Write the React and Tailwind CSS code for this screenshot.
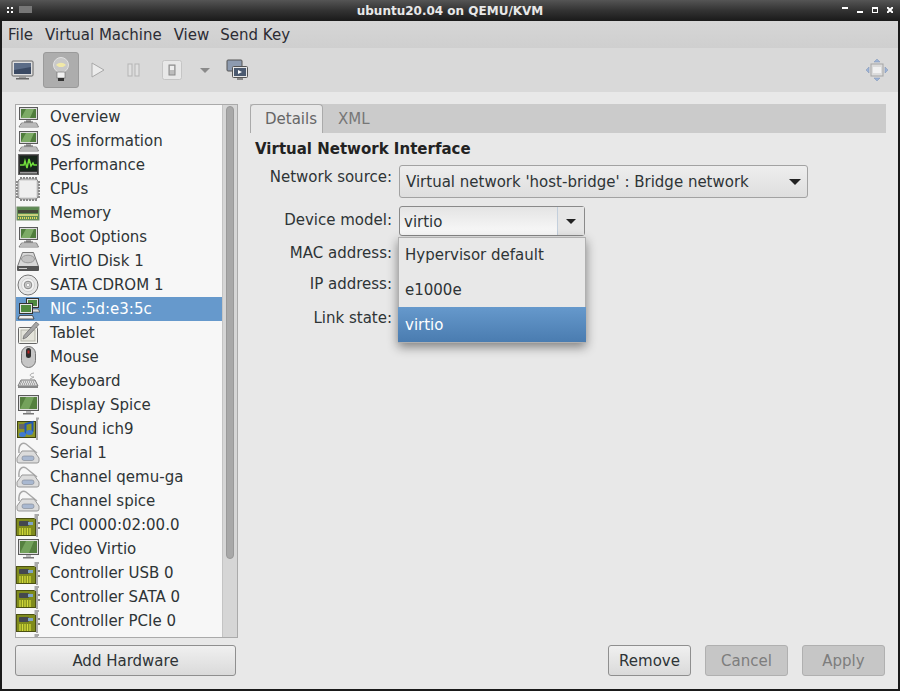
import React from "react";

const Monitor = () => (
  <svg width="24" height="24" viewBox="0 0 24 24">
    <rect x="3.500" y="2.500" width="18" height="12" fill="#dcdcdc" stroke="#5a5a5a" />
    <rect x="5" y="4" width="15" height="9" fill="#4f7d3c" />
    <path d="M10 4h8l-4 9H5z" fill="#7dab66" />
    <rect x="10" y="15" width="5" height="2" fill="#a5a5a5" />
    <path d="M8 17h9" stroke="#555" />
    <path d="M3 22l2.500-4h15l2 4z" fill="#ededed" stroke="#666" strokeWidth="0.800" />
    <path d="M5 20h16" stroke="#8a8a8a" />
  </svg>
);
const Display = () => (
  <svg width="24" height="24" viewBox="0 0 24 24">
    <rect x="2.500" y="2.500" width="20" height="15" fill="#dedede" stroke="#5a5a5a" />
    <rect x="4" y="4" width="17" height="12" fill="#55803f" />
    <path d="M10 4h8l-5 12H4z" fill="#74a25c" />
    <rect x="10" y="18" width="5" height="2" fill="#bbb" />
    <rect x="7" y="20" width="11" height="1.500" fill="#777" />
  </svg>
);
const Perf = () => (
  <svg width="24" height="24" viewBox="0 0 24 24">
    <rect x="2.500" y="1.500" width="20" height="20" fill="#333" stroke="#666" />
    <rect x="4" y="3" width="17" height="15" fill="#16261a" />
    <path d="M4 12h4l1-4 2 7 2-9 2 7 2-3 1 2h3" fill="none" stroke="#72e03c" strokeWidth="1.500" />
    <rect x="4" y="19" width="17" height="1.500" fill="#999" />
  </svg>
);
const Cpu = () => (
  <svg width="24" height="24" viewBox="0 0 24 24">
    <path d="M5 0v24M8 0v24M11 0v24M14 0v24M17 0v24M20 0v24M0 5h24M0 8h24M0 11h24M0 14h24M0 17h24M0 20h24" stroke="#6a6a6a" strokeWidth="1.600" />
    <rect x="2" y="2" width="20" height="20" rx="3" fill="#dcdcdc" stroke="#8a8a8a" />
    <rect x="4" y="4" width="16" height="16" fill="#efefef" />
  </svg>
);
const Memory = () => (
  <svg width="24" height="24" viewBox="0 0 24 24">
    <rect x="1" y="6" width="22" height="13" fill="#5d8a52" stroke="#6f8c65" />
    <rect x="2" y="9" width="20" height="3" fill="#45483a" />
    <rect x="2" y="13" width="20" height="2" fill="#c9cf7b" />
    <path d="M2 17h20" stroke="#e1d85c" strokeWidth="2" strokeDasharray="1 1" />
  </svg>
);
const Disk = () => (
  <svg width="24" height="24" viewBox="0 0 24 24">
    <path d="M6.500 3.500h11l5 14H1.500z" fill="#d8d8d8" stroke="#777" />
    <ellipse cx="12" cy="10" rx="6.500" ry="3.800" fill="#c2c2c2" stroke="#999" />
    <rect x="1" y="17" width="22" height="5" rx="1" fill="#555" />
    <rect x="3" y="19" width="8" height="1" fill="#ccc" />
  </svg>
);
const Cdrom = () => (
  <svg width="24" height="24" viewBox="0 0 24 24">
    <circle cx="12" cy="12" r="10" fill="#e6e6e6" stroke="#777" />
    <circle cx="12" cy="12" r="6.500" fill="#f4f4f4" stroke="#d2d2d2" />
    <circle cx="12" cy="12" r="3.800" fill="#c8c8c8" stroke="#888" />
    <circle cx="12" cy="12" r="1.600" fill="#fff" stroke="#999" strokeWidth="0.600" />
  </svg>
);
const Nic = () => (
  <svg width="24" height="24" viewBox="0 0 24 24">
    <rect x="10.500" y="1.500" width="12" height="9" fill="#e5e5e5" stroke="#333" />
    <rect x="12" y="3" width="9" height="6" fill="#4f8a3e" />
    <path d="M13 12h9l2 3H15z" fill="#ddd" stroke="#444" strokeWidth="0.600" />
    <rect x="3.500" y="6.500" width="13" height="10" fill="#e5e5e5" stroke="#333" />
    <rect x="5" y="8" width="10" height="7" fill="#4f8a3e" />
    <path d="M2 22l1.500-3.500h13L18 22z" fill="#eee" stroke="#333" strokeWidth="0.800" />
  </svg>
);
const Tablet = () => (
  <svg width="24" height="24" viewBox="0 0 24 24">
    <rect x="2.500" y="6.500" width="19" height="16" rx="1" fill="#f4f4ee" stroke="#666" />
    <rect x="5" y="9" width="14" height="11" fill="#e3e3da" stroke="#b5b5aa" />
    <path d="M7 18l1-3.500L20 1l3 2.500L10.500 16.500z" fill="#a5a5a5" stroke="#666" strokeWidth="0.700" />
  </svg>
);
const Mouse = () => (
  <svg width="24" height="24" viewBox="0 0 24 24">
    <rect x="5.500" y="1.500" width="14" height="21" rx="7" fill="#c6c6c6" stroke="#777" />
    <rect x="10" y="3" width="5" height="10" rx="2.500" fill="#2e2e2e" />
    <rect x="11.500" y="5.500" width="2" height="3" fill="#b22" />
  </svg>
);
const Keyboard = () => (
  <svg width="24" height="24" viewBox="0 0 24 24">
    <path d="M18 4c-6 1-4 4 0 4l-4 2" fill="none" stroke="#aaa" />
    <path d="M5 11h14l3 6H2z" fill="#ddd" stroke="#777" />
    <path d="M5 13h14M4 15h16" stroke="#777" strokeDasharray="1 1" />
    <rect x="2" y="17" width="20" height="2" fill="#888" />
  </svg>
);
const Sound = () => (
  <svg width="24" height="24" viewBox="0 0 24 24">
    <rect x="1.500" y="4.500" width="18" height="16" fill="#8b9526" stroke="#3f4410" />
    <rect x="3" y="7" width="6" height="5" fill="#666" />
    <path d="M20 1.500h3M21 1.500V23" fill="none" stroke="#a9a9a9" strokeWidth="2" />
    <path d="M9.500 17V7l7-2v10" fill="none" stroke="#1f55b5" strokeWidth="2" />
    <ellipse cx="6.500" cy="17.500" rx="3.500" ry="2.500" fill="#3f7ad0" />
    <ellipse cx="13.500" cy="15.500" rx="3.500" ry="2.500" fill="#3f7ad0" />
  </svg>
);
const Serial = () => (
  <svg width="24" height="24" viewBox="0 0 24 24">
    <path d="M3 12C2 3 7 1 10 3l11 9" fill="none" stroke="#a8a8a8" strokeWidth="1.500" />
    <path d="M6 10h12l5 7v3a2 2 0 0 1-2 2H3a2 2 0 0 1-2-2v-3z" fill="#dcdcdc" stroke="#979797" />
    <rect x="6" y="15" width="12" height="4.500" rx="2" fill="#a9b8d0" stroke="#7e8590" strokeWidth="0.600" />
  </svg>
);
const Pci = () => (
  <svg width="24" height="24" viewBox="0 0 24 24">
    <rect x="0.500" y="5.500" width="19" height="17" fill="#7f8b1d" stroke="#4b5012" />
    <rect x="3" y="8" width="10" height="5" rx="1" fill="#44484f" />
    <rect x="12" y="9" width="5" height="3" fill="#7fa3c7" />
    <path d="M4 15v7M6.500 15v7M9 15v7M11.500 15v7M14 15v7" stroke="#d2d93a" strokeWidth="1.300" />
    <path d="M19.500 6V2H23M21 2v22" fill="none" stroke="#a9a9a9" strokeWidth="2" />
    <rect x="22" y="9" width="2" height="2" fill="#888" />
    <rect x="22" y="14" width="2" height="2" fill="#888" />
  </svg>
);

const hardware = [
  ["Overview", Monitor],
  ["OS information", Monitor],
  ["Performance", Perf],
  ["CPUs", Cpu],
  ["Memory", Memory],
  ["Boot Options", Monitor],
  ["VirtIO Disk 1", Disk],
  ["SATA CDROM 1", Cdrom],
  ["NIC :5d:e3:5c", Nic],
  ["Tablet", Tablet],
  ["Mouse", Mouse],
  ["Keyboard", Keyboard],
  ["Display Spice", Display],
  ["Sound ich9", Sound],
  ["Serial 1", Serial],
  ["Channel qemu-ga", Serial],
  ["Channel spice", Serial],
  ["PCI 0000:02:00.0", Pci],
  ["Video Virtio", Display],
  ["Controller USB 0", Pci],
  ["Controller SATA 0", Pci],
  ["Controller PCIe 0", Pci],
  ["", Pci],
];

const Tool = ({ children, className = "" }) => (
  <div className={`flex h-9 w-9 items-center justify-center ${className}`}>{children}</div>
);

function Row({ label, labelClass = "", children, rowClass = "" }) {
  return (
    <div className={`flex items-start ${rowClass}`}>
      <div className={`w-[142px] whitespace-nowrap text-right ${labelClass}`}>{label}</div>
      {children}
    </div>
  );
}

export default function App() {
  return (
    <div
      className="flex h-[691px] w-[900px] flex-col overflow-hidden bg-[#1a1a1a] text-[15px] leading-[18px] text-[#2e3436]"
      style={{ fontFamily: '"DejaVu Sans", sans-serif' }}
    >
      {/* Title bar */}
      <div className="relative flex h-[21px] shrink-0 items-center justify-center bg-gradient-to-b from-[#555] via-[#333] via-50% to-[#1a1a1a]">
        <span className="text-[12px] font-bold text-[#e8e8e8]">ubuntu20.04 on QEMU/KVM</span>
        <div className="absolute left-[7px] top-[7px] grid grid-cols-2 gap-[2px]">
          <i className="h-[2px] w-[2px] bg-white" />
          <i className="h-[2px] w-[2px] bg-white" />
          <i className="h-[2px] w-[2px] bg-white" />
          <i className="h-[2px] w-[2px] bg-white" />
        </div>
        <div className="absolute left-[19px] top-[6px] h-[7px] w-[13px] bg-[#777]" />
        <div className="absolute left-[842px] top-[7px] h-[2px] w-[6px] bg-white" />
        <div className="absolute left-[857px] top-[11px] h-[2px] w-[6px] bg-white" />
        <div className="absolute left-[872px] top-[7px] h-[6px] w-[6px] border border-t-2 border-white" />
        <svg className="absolute left-[887px] top-[7px]" width="6" height="6" viewBox="0 0 6 6">
          <path d="M0 0l6 6M6 0l-6 6" stroke="#fff" strokeWidth="2" />
        </svg>
      </div>

      <div className="ml-[2px] mr-[2px] flex h-[668px] flex-col bg-[#e8e8e8]">
        {/* Menu bar */}
        <div className="flex h-[27px] shrink-0 items-center gap-[12px] bg-gradient-to-b from-[#d6d6d6] to-[#cfcfcf] pl-[6px] text-[#2c2c34]">
          <span>File</span>
          <span>Virtual Machine</span>
          <span>View</span>
          <span className="-ml-[1px]">Send Key</span>
        </div>

        {/* Toolbar */}
        <div className="flex h-[44px] shrink-0 items-center bg-[#d9d9d9] pl-[3px] pr-[3px]">
          <Tool>
            <svg width="24" height="22" viewBox="0 0 24 22">
              <rect x="1" y="2" width="21" height="15" rx="1" fill="#dfdfdf" stroke="#666" />
              <rect x="3" y="4" width="17" height="11" fill="#3b4a63" />
              <path d="M3 4h17v4L3 11z" fill="#5b6c87" />
              <rect x="8" y="17" width="7" height="2" fill="#999" />
              <rect x="5" y="19" width="13" height="1.500" fill="#666" />
            </svg>
          </Tool>
          <Tool className="ml-[2px] rounded-[3px] border border-[#9a9a9a] bg-[#adadad]">
            <svg width="20" height="28" viewBox="0 0 20 28">
              <circle cx="10" cy="9" r="7.500" fill="#c9c9c9" stroke="#e2e2e2" />
              <path d="M5 9c3-3 7-3 10 0l-3 2H8z" fill="#f1e9a8" />
              <rect x="6" y="16" width="8" height="6" fill="#f1f1f1" stroke="#666" strokeWidth="0.600" />
              <rect x="7" y="22" width="6" height="3" fill="#333" />
            </svg>
          </Tool>
          <Tool className="ml-[1px]">
            <svg width="16" height="18" viewBox="0 0 16 18">
              <path d="M2 2l12 7L2 16z" fill="#ececec" stroke="#a8a8a8" />
            </svg>
          </Tool>
          <Tool>
            <svg width="14" height="14" viewBox="0 0 14 14">
              <rect x="1" y="1" width="4" height="12" fill="#e0e0e0" stroke="#b5b5b5" />
              <rect x="8" y="1" width="4" height="12" fill="#e0e0e0" stroke="#b5b5b5" />
            </svg>
          </Tool>
          <Tool className="ml-[2px]">
            <svg width="22" height="22" viewBox="0 0 22 22">
              <rect x="1.500" y="1.500" width="19" height="19" rx="2" fill="#e8e8e8" stroke="#c5c5c5" />
              <rect x="8" y="6" width="6" height="10" fill="#bdbdbd" stroke="#8a8a8a" />
              <rect x="9" y="7" width="4" height="4" fill="#eee" />
            </svg>
          </Tool>
          <div className="ml-[4px] flex h-9 w-[22px] items-center justify-center">
            <div className="h-0 w-0 border-x-[5px] border-t-[5px] border-x-transparent border-t-[#8a8a8a]" />
          </div>
          <div className="ml-[3px] flex h-9 w-9 items-center justify-center">
            <svg width="24" height="24" viewBox="0 0 24 24">
              <rect x="2" y="2" width="15" height="11" rx="1" fill="#8d9bb0" stroke="#555" />
              <rect x="7.500" y="8.500" width="15" height="11" rx="1" fill="#e8e8e8" stroke="#555" />
              <rect x="9" y="10" width="12" height="8" fill="#4b5a70" />
              <path d="M13 12l4 2-4 2z" fill="#fff" />
              <rect x="12" y="20" width="6" height="2" fill="#888" />
            </svg>
          </div>
          <div className="ml-auto flex h-9 w-9 items-center justify-center">
            <svg width="24" height="24" viewBox="0 0 24 24">
              <path d="M12 1l3 3H9zM12 23l-3-3h6zM1 12l3-3v6zM23 12l-3 3V9z" fill="#9db4d6" stroke="#7f93b5" strokeWidth="0.500" />
              <rect x="6" y="6" width="12" height="12" fill="#dcdcdc" stroke="#a5a5a5" />
              <rect x="8" y="9" width="8" height="6" fill="#f1f1f1" />
            </svg>
          </div>
        </div>

        {/* Body */}
        <div className="flex min-h-0 flex-1 pb-[13px] pl-[13px] pr-[12px] pt-[12px]">
          {/* Left column */}
          <div className="flex w-[223px] shrink-0 flex-col">
            <div className="flex h-[534px] overflow-hidden border border-[#aaa] bg-[#f7f7f7]">
              <ul className="min-w-0 flex-1">
                {hardware.map(([label, Icon], i) => (
                  <li
                    key={i}
                    className={`flex h-[24px] items-center overflow-hidden whitespace-nowrap ${i === 8 ? "bg-[#6699cc] text-white" : ""}`}
                  >
                    <span className="flex w-[24px] shrink-0 items-center justify-center overflow-hidden">
                      <Icon />
                    </span>
                    <span className="ml-[10px]">{label}</span>
                  </li>
                ))}
              </ul>
              <div className="flex w-[15px] shrink-0 justify-center border-l border-[#c4c4c4] bg-[#d6d6d6]">
                <div className="mt-[1px] h-[453px] w-[8px] rounded-full border border-[#999] bg-[#a8a8a8]" />
              </div>
            </div>
            <button className="mt-[7px] h-[31px] w-[221px] rounded-[3px] border border-[#8f8f8f] bg-gradient-to-b from-[#f0f0f0] to-[#dadada] text-center">
              Add Hardware
            </button>
          </div>

          {/* Right column */}
          <div className="ml-[12px] flex min-w-0 flex-1 flex-col">
            <div className="flex h-[29px] shrink-0 bg-[#cbcbcb]">
              <div className="flex h-[29px] w-[73px] items-center justify-end rounded-t-[4px] border border-b-0 border-[#aaa] bg-[#e8e8e8] pr-[5px] text-[#666]">
                Details
              </div>
              <div className="ml-[15px] flex items-center text-[#777]">XML</div>
            </div>

            <div className="relative flex min-h-0 flex-1 flex-col pl-[5px] pt-[7px]">
              <div className="font-bold text-[#222]">Virtual Network Interface</div>

              <Row label="Network source:" rowClass="mt-[7px] -ml-[5px]" labelClass="pt-[3px]">
                <div className="ml-[7px] flex h-[33px] w-[409px] items-center justify-between rounded-[3px] border border-[#a2a2a2] bg-gradient-to-b from-[#eeeeee] to-[#dedede] pl-[6px] pr-[6px]">
                  <span>Virtual network 'host-bridge' : Bridge network</span>
                  <div className="h-0 w-0 border-x-[6px] border-t-[6px] border-x-transparent border-t-[#222]" />
                </div>
              </Row>

              <Row label="Device model:" rowClass="mt-[8px] -ml-[5px]" labelClass="pt-[5px]">
                <div className="ml-[7px] flex h-[30px] w-[186px] rounded-[3px] border border-[#8a8a8a] bg-gradient-to-b from-[#e4e4e4] to-[#fafafa]">
                  <div className="flex flex-1 items-center pl-[4px] pt-[1px]">virtio</div>
                  <div className="flex w-[27px] items-center justify-center border-l border-[#c3cfdc] bg-[#e6e6e6]">
                    <div className="h-0 w-0 border-x-[5px] border-t-[5px] border-x-transparent border-t-[#222]" />
                  </div>
                </div>
              </Row>

              <Row label="MAC address:" rowClass="mt-[8px] -ml-[5px]" />
              <Row label="IP address:" rowClass="mt-[13px] -ml-[5px]" />
              <Row label="Link state:" rowClass="mt-[16px] -ml-[5px]" />

              <div className="absolute left-[148px] top-[104px] z-10 w-[188px] border border-[#b0b0b0] bg-[#e8e8e8] shadow-[0_4px_10px_rgba(0,0,0,0.45)]">
                <div className="flex h-[34px] items-center pl-[6px]">Hypervisor default</div>
                <div className="flex h-[35px] items-center pl-[6px]">e1000e</div>
                <div className="-mx-[1px] flex h-[35px] items-center bg-gradient-to-b from-[#6699cc] to-[#4a7cb0] pl-[7px] text-white">virtio</div>
              </div>

              <div className="mt-auto flex justify-end gap-[14px] pr-[1px]">
                <button className="h-[31px] w-[83px] rounded-[3px] border border-[#8f8f8f] bg-gradient-to-b from-[#f0f0f0] to-[#dadada] text-center">
                  Remove
                </button>
                <button className="h-[31px] w-[83px] rounded-[3px] border border-[#b0b0b0] bg-[#c6c6c6] text-center text-[#7d7d7d]">
                  Cancel
                </button>
                <button className="h-[31px] w-[83px] rounded-[3px] border border-[#b0b0b0] bg-[#c6c6c6] text-center text-[#7d7d7d]">
                  Apply
                </button>
              </div>
            </div>
          </div>
        </div>
      </div>
    </div>
  );
}
